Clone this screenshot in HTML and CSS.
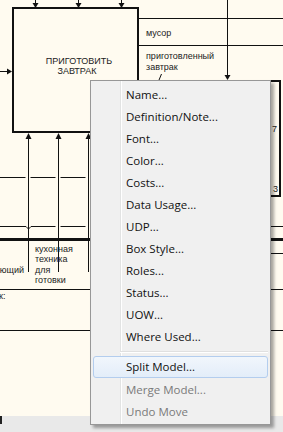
FILE: index.html
```html
<!DOCTYPE html>
<html lang="ru">

<head>
    <meta charset="utf-8">
    <meta name="viewport" content="width=device-width, initial-scale=1.0">
    <title>IDEF0 - контекстное меню</title>

    <link rel="stylesheet" href="styles.css">
</head>

<body>

    <div class="skaerm">

        <!-- diagrammet: frit lærred -->
        <svg class="diagram" width="283" height="416" viewBox="0 0 283 416">
            <rect x="0" y="0" width="283" height="416" fill="#fffbf0" />

            <g class="linjer">
                <!-- pile ind i boksen ovenfra -->
                <line x1="35.5" y1="0" x2="35.5" y2="7" />
                <line x1="78.5" y1="0" x2="78.5" y2="7" />
                <line x1="121.5" y1="0" x2="121.5" y2="7" />

                <!-- pil fra venstre -->
                <line x1="0" y1="71.5" x2="10" y2="71.5" />

                <!-- pile nedefra -->
                <line x1="28.5" y1="134" x2="28.5" y2="272" />
                <line x1="58.5" y1="134" x2="58.5" y2="272" />
                <line x1="88.5" y1="134" x2="88.5" y2="272" />

                <!-- højre side -->
                <line x1="139" y1="18.5" x2="283" y2="18.5" />
                <line x1="139" y1="45.5" x2="283" y2="45.5" />
                <line x1="227.5" y1="0" x2="227.5" y2="78" />
                <line x1="159" y1="80" x2="161.5" y2="74" />

                <!-- vandrette linjer under boksen -->
                <line x1="0" y1="177.5" x2="25.5" y2="177.5" />
                <line x1="30.5" y1="177.5" x2="55.5" y2="177.5" />
                <line x1="60.5" y1="177.5" x2="85.5" y2="177.5" />
                <line x1="90.5" y1="177.5" x2="200" y2="177.5" />

                <polyline points="0,226.5 26,226.5 28.5,229 31,226.5 55.5,226.5" />
                <line x1="60.5" y1="226.5" x2="85.5" y2="226.5" />
                <line x1="90.5" y1="226.5" x2="283" y2="226.5" />

                <line class="tyk" x1="0" y1="239.5" x2="283" y2="239.5" />
                <line x1="250" y1="253.5" x2="283" y2="253.5" />
                <line x1="0" y1="289.5" x2="283" y2="289.5" />
                <line x1="0" y1="330.5" x2="283" y2="330.5" />
            </g>

            <g class="spidser">
                <polygon points="32.5,3 38.5,3 35.5,8" />
                <polygon points="75.5,3 81.5,3 78.5,8" />
                <polygon points="118.5,3 124.5,3 121.5,8" />
                <polygon points="7,68.5 7,74.5 12,71.5" />
                <polygon points="25.5,139 31.5,139 28.5,133" />
                <polygon points="55.5,139 61.5,139 58.5,133" />
                <polygon points="85.5,139 91.5,139 88.5,133" />
                <polygon points="224.5,75 230.5,75 227.5,80" />
            </g>

            <!-- bokse -->
            <rect class="boks" x="13" y="8" width="125" height="124" />
            <rect class="boks" x="200" y="81" width="80" height="115" />

            <g class="tekst">
                <text x="79" y="64" text-anchor="middle">ПРИГОТОВИТЬ</text>
                <text x="77" y="74" text-anchor="middle">ЗАВТРАК</text>

                <text x="146" y="36">мусор</text>
                <text x="146" y="59">приготовленный</text>
                <text x="146" y="69.5">завтрак</text>

                <text x="35" y="252">кухонная</text>
                <text x="35" y="262">техника</text>
                <text x="35" y="272.5">для</text>
                <text x="35" y="283">готовки</text>
                <text x="24" y="272.5" text-anchor="end">ющий</text>
                <text x="-1" y="299">к:</text>

                <text x="272" y="132">7</text>
                <text x="273" y="192">3</text>
            </g>
        </svg>

        <div class="statuslinje"><span class="markor"></span></div>

        <!-- kontekstmenu -->
        <ul class="menu">
            <li class="punkt">Name...</li>
            <li class="punkt">Definition/Note...</li>
            <li class="punkt">Font...</li>
            <li class="punkt">Color...</li>
            <li class="punkt">Costs...</li>
            <li class="punkt">Data Usage...</li>
            <li class="punkt">UDP...</li>
            <li class="punkt">Box Style...</li>
            <li class="punkt">Roles...</li>
            <li class="punkt">Status...</li>
            <li class="punkt">UOW...</li>
            <li class="punkt">Where Used...</li>
            <li class="skille"></li>
            <li class="punkt valgt">Split Model...</li>
            <li class="punkt slukket">Merge Model...</li>
            <li class="punkt slukket">Undo Move</li>
        </ul>

    </div>

</body>

</html>
```

FILE: styles.css
```css
body * {
    box-sizing: border-box;
}

body {
    margin: 0;
    padding: 0;
    overflow: hidden;
    background-color: #e9e9e9;
}

.skaerm {
    position: relative;
    width: 283px;
    height: 432px;
    overflow: hidden;
}

.diagram {
    display: block;
}

.linjer line,
.linjer polyline {
    stroke: #111;
    stroke-width: 1;
    fill: none;
}

.linjer .tyk {
    stroke-width: 3;
}

.spidser polygon {
    fill: #111;
}

.boks {
    fill: none;
    stroke: #111;
    stroke-width: 2;
}

.tekst text {
    font-family: "Liberation Sans", Arial, sans-serif;
    font-size: 9px;
    fill: #222;
}

.statuslinje {
    height: 16px;
    background-color: #e9e9e9;
}

.markor {
    display: block;
    width: 2px;
    height: 8px;
    background-color: #222;
}

/* menuen ligger oven på diagrammet */
.menu {
    position: absolute;
    left: 90px;
    top: 80px;
    width: 181px;
    margin: 0;
    padding: 2px;
    list-style: none;
    border: 1px solid #979797;
    background-color: #f0f0f0;
    background-image: linear-gradient(to right,
            transparent 29px,
            #e2e3e3 29px, #e2e3e3 30px,
            #ffffff 30px, #ffffff 31px,
            transparent 31px);
    box-shadow: 3px 3px 3px rgba(0, 0, 0, 0.35);
    font-family: "Open Sans", "Noto Sans", sans-serif;
    font-size: 11.5px;
    color: #111;
}

.punkt {
    height: 22px;
    line-height: 22px;
    padding-left: 32px;
    border: 1px solid transparent;
    border-radius: 3px;
    white-space: nowrap;
}

.punkt.valgt {
    border-color: #b3cdee;
    background-image: linear-gradient(#f1f6fc, #e3edf9);
    line-height: 20px;
}

.punkt.slukket {
    color: #7a7a7a;
}

.skille {
    height: 9px;
    margin-left: 27px;
    background-image: linear-gradient(transparent 4px,
            #e0e0e0 4px, #e0e0e0 5px,
            #ffffff 5px, #ffffff 6px,
            transparent 6px);
}
```
